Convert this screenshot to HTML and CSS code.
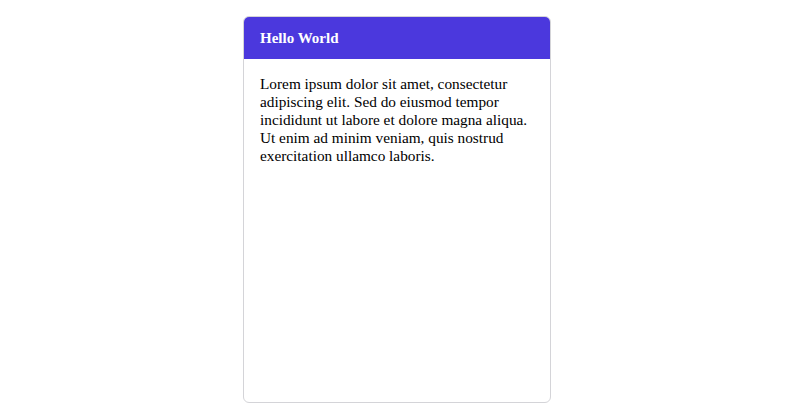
FILE: index.html
```html
<!DOCTYPE html>
<html lang="en">
  <head>
    <meta charset="UTF-8" />
    <meta name="viewport" content="width=device-width, initial-scale=1.0" />
    <title>Card</title>
    <link rel="stylesheet" href="styles.css">
  </head>

  <body>
    <div class="card">
      <div class="card-header">Hello World</div>
      <div class="card-body">
        Lorem ipsum dolor sit amet, consectetur adipiscing elit. Sed do eiusmod tempor
        incididunt ut labore et dolore magna aliqua. Ut enim ad minim veniam, quis nostrud
        exercitation ullamco laboris.
      </div>
    </div>
  </body>
</html>
```

FILE: styles.css
```css
/* Page */
body {
  font-family: "Liberation Serif", "Times New Roman", serif;
  margin: 0;
  padding: 16px 0 15px;
  display: flex;
  justify-content: center;
  background-color: #fff;
}

/* Card */
.card {
  width: 306px;
  height: 385px;
  margin-right: 6px;
  border: 1px solid #d4d4d8;
  border-radius: 6px;
  overflow: hidden;
  display: flex;
  flex-direction: column;
}

.card-header {
  background-color: #4b38dd;
  color: white;
  font-size: 15px;
  line-height: 18px;
  font-weight: bold;
  padding: 12px 16px;
}

.card-body {
  padding: 16px;
  font-size: 15.3px;
  line-height: 18px;
  color: #000;
}
```
